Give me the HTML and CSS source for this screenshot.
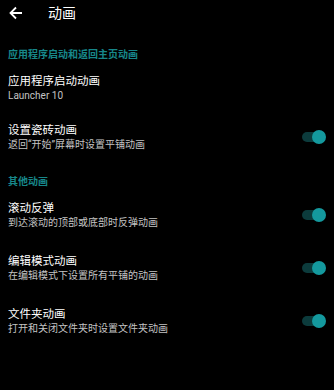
FILE: index.html
```html
<!DOCTYPE html>
<html lang="zh-CN">
<head>
<meta charset="utf-8">
<link rel="stylesheet" href="styles.css">
</head>
<body>
<div class="screen">
  <div class="topbar">
    <svg class="back" width="14" height="14" viewBox="0 0 14 14">
      <path d="M13 7H2M7 1.5L1.5 7L7 12.5" fill="none" stroke="#fff" stroke-width="1.8"/>
    </svg>
    <div class="title">动画</div>
  </div>

  <div class="header header-first">应用程序启动和返回主页动画</div>
  <div class="row row-first">
    <div class="texts">
      <div class="name">应用程序启动动画</div>
      <div class="sub">Launcher 10</div>
    </div>
  </div>
  <div class="row">
    <div class="texts">
      <div class="name">设置瓷砖动画</div>
      <div class="sub">返回“开始”屏幕时设置平铺动画</div>
    </div>
    <div class="switch"><span class="track"></span><span class="thumb"></span></div>
  </div>

  <div class="header">其他动画</div>
  <div class="row">
    <div class="texts">
      <div class="name">滚动反弹</div>
      <div class="sub">到达滚动的顶部或底部时反弹动画</div>
    </div>
    <div class="switch"><span class="track"></span><span class="thumb"></span></div>
  </div>
  <div class="row">
    <div class="texts">
      <div class="name">编辑模式动画</div>
      <div class="sub">在编辑模式下设置所有平铺的动画</div>
    </div>
    <div class="switch"><span class="track"></span><span class="thumb"></span></div>
  </div>
  <div class="row">
    <div class="texts">
      <div class="name">文件夹动画</div>
      <div class="sub">打开和关闭文件夹时设置文件夹动画</div>
    </div>
    <div class="switch"><span class="track"></span><span class="thumb"></span></div>
  </div>
</div>
</body>
</html>
```
FILE: styles.css
```css
html, body {
  margin: 0;
  padding: 0;
  background: #000;
}
body {
  width: 334px;
  height: 390px;
  overflow: hidden;
  font-family: Roboto, "Noto Sans CJK SC", sans-serif;
  color: #fff;
}
.screen {
  display: flex;
  flex-direction: column;
}
.topbar {
  height: 26px;
  display: flex;
  align-items: center;
}
.back {
  margin-left: 9px;
  width: 14px;
  height: 14px;
}
.title {
  margin-left: 25px;
  font-size: 14px;
  line-height: 18px;
  color: #fff;
}
.header {
  padding: 11px 8px 0;
  font-size: 10px;
  line-height: 14px;
  font-weight: 700;
  color: #17878a;
}
.header-first {
  padding-top: 22px;
}
.row {
  display: flex;
  align-items: center;
  justify-content: space-between;
  padding: 11px 8px 12px;
}
.row-first {
  padding-bottom: 8px;
}
.texts {
  display: flex;
  flex-direction: column;
}
.name {
  font-size: 11.5px;
  line-height: 16px;
  color: #fff;
}
.sub {
  font-size: 10px;
  line-height: 14px;
  color: #c4c4c4;
}
.switch {
  position: relative;
  width: 24px;
  height: 14px;
  flex: none;
}
.track {
  position: absolute;
  left: 0;
  top: 2px;
  width: 21px;
  height: 10px;
  border-radius: 5px;
  background: #0c3b3c;
}
.thumb {
  position: absolute;
  right: 0;
  top: 0;
  width: 14px;
  height: 14px;
  border-radius: 50%;
  background: #14999e;
}
```
